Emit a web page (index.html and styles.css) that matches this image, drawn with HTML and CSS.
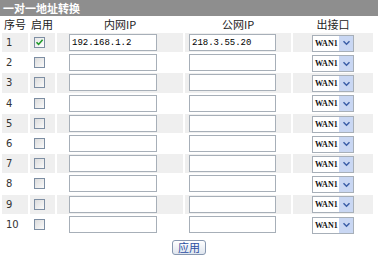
FILE: index.html
```
<!DOCTYPE html>
<html>
	<head>
		<meta charset="UTF-8">
		<title>一对一地址转换</title>
		<link rel="stylesheet" href="styles.css">
	</head>
	<body>
		<div class="title">一对一地址转换</div>
		<table class="map">
			<colgroup>
				<col class="c-seq"><col class="c-on"><col class="c-in"><col class="c-pub"><col class="c-out">
			</colgroup>
			<tr class="head">
				<th class="seq">序号</th><th class="on">启用</th><th>内网IP</th><th>公网IP</th><th>出接口</th>
			</tr>
			<tr class="odd">
				<td class="seq">1</td>
				<td class="on"><span class="chk checked"><svg width="9" height="9" viewBox="0 0 9 9"><path d="M1.5 4.2 L3.6 6.4 L7.6 1.8" fill="none" stroke="#1f9a2a" stroke-width="1.6"/></svg></span></td>
				<td class="in"><input class="ip" type="text" value="192.168.1.2"></td>
				<td class="pub"><input class="ip ip2" type="text" value="218.3.55.20"></td>
				<td class="out"><span class="sel"><span class="val">WAN1</span><span class="arr"><svg width="9" height="6" viewBox="0 0 9 6"><path d="M1.5 1.2 L4.5 4.2 L7.5 1.2" fill="none" stroke="#3c5fa8" stroke-width="1.5"/></svg></span></span></td>
			</tr>
			<tr>
				<td class="seq">2</td>
				<td class="on"><span class="chk"></span></td>
				<td class="in"><input class="ip" type="text"></td>
				<td class="pub"><input class="ip ip2" type="text"></td>
				<td class="out"><span class="sel"><span class="val">WAN1</span><span class="arr"><svg width="9" height="6" viewBox="0 0 9 6"><path d="M1.5 1.2 L4.5 4.2 L7.5 1.2" fill="none" stroke="#3c5fa8" stroke-width="1.5"/></svg></span></span></td>
			</tr>
			<tr class="odd">
				<td class="seq">3</td>
				<td class="on"><span class="chk"></span></td>
				<td class="in"><input class="ip" type="text"></td>
				<td class="pub"><input class="ip ip2" type="text"></td>
				<td class="out"><span class="sel"><span class="val">WAN1</span><span class="arr"><svg width="9" height="6" viewBox="0 0 9 6"><path d="M1.5 1.2 L4.5 4.2 L7.5 1.2" fill="none" stroke="#3c5fa8" stroke-width="1.5"/></svg></span></span></td>
			</tr>
			<tr>
				<td class="seq">4</td>
				<td class="on"><span class="chk"></span></td>
				<td class="in"><input class="ip" type="text"></td>
				<td class="pub"><input class="ip ip2" type="text"></td>
				<td class="out"><span class="sel"><span class="val">WAN1</span><span class="arr"><svg width="9" height="6" viewBox="0 0 9 6"><path d="M1.5 1.2 L4.5 4.2 L7.5 1.2" fill="none" stroke="#3c5fa8" stroke-width="1.5"/></svg></span></span></td>
			</tr>
			<tr class="odd">
				<td class="seq">5</td>
				<td class="on"><span class="chk"></span></td>
				<td class="in"><input class="ip" type="text"></td>
				<td class="pub"><input class="ip ip2" type="text"></td>
				<td class="out"><span class="sel"><span class="val">WAN1</span><span class="arr"><svg width="9" height="6" viewBox="0 0 9 6"><path d="M1.5 1.2 L4.5 4.2 L7.5 1.2" fill="none" stroke="#3c5fa8" stroke-width="1.5"/></svg></span></span></td>
			</tr>
			<tr>
				<td class="seq">6</td>
				<td class="on"><span class="chk"></span></td>
				<td class="in"><input class="ip" type="text"></td>
				<td class="pub"><input class="ip ip2" type="text"></td>
				<td class="out"><span class="sel"><span class="val">WAN1</span><span class="arr"><svg width="9" height="6" viewBox="0 0 9 6"><path d="M1.5 1.2 L4.5 4.2 L7.5 1.2" fill="none" stroke="#3c5fa8" stroke-width="1.5"/></svg></span></span></td>
			</tr>
			<tr class="odd">
				<td class="seq">7</td>
				<td class="on"><span class="chk"></span></td>
				<td class="in"><input class="ip" type="text"></td>
				<td class="pub"><input class="ip ip2" type="text"></td>
				<td class="out"><span class="sel"><span class="val">WAN1</span><span class="arr"><svg width="9" height="6" viewBox="0 0 9 6"><path d="M1.5 1.2 L4.5 4.2 L7.5 1.2" fill="none" stroke="#3c5fa8" stroke-width="1.5"/></svg></span></span></td>
			</tr>
			<tr>
				<td class="seq">8</td>
				<td class="on"><span class="chk"></span></td>
				<td class="in"><input class="ip" type="text"></td>
				<td class="pub"><input class="ip ip2" type="text"></td>
				<td class="out"><span class="sel"><span class="val">WAN1</span><span class="arr"><svg width="9" height="6" viewBox="0 0 9 6"><path d="M1.5 1.2 L4.5 4.2 L7.5 1.2" fill="none" stroke="#3c5fa8" stroke-width="1.5"/></svg></span></span></td>
			</tr>
			<tr class="odd">
				<td class="seq">9</td>
				<td class="on"><span class="chk"></span></td>
				<td class="in"><input class="ip" type="text"></td>
				<td class="pub"><input class="ip ip2" type="text"></td>
				<td class="out"><span class="sel"><span class="val">WAN1</span><span class="arr"><svg width="9" height="6" viewBox="0 0 9 6"><path d="M1.5 1.2 L4.5 4.2 L7.5 1.2" fill="none" stroke="#3c5fa8" stroke-width="1.5"/></svg></span></span></td>
			</tr>
			<tr>
				<td class="seq">10</td>
				<td class="on"><span class="chk"></span></td>
				<td class="in"><input class="ip" type="text"></td>
				<td class="pub"><input class="ip ip2" type="text"></td>
				<td class="out"><span class="sel"><span class="val">WAN1</span><span class="arr"><svg width="9" height="6" viewBox="0 0 9 6"><path d="M1.5 1.2 L4.5 4.2 L7.5 1.2" fill="none" stroke="#3c5fa8" stroke-width="1.5"/></svg></span></span></td>
			</tr>
		</table>
		<div class="actions"><button class="btn" type="button">应用</button></div>
	</body>
</html>
```

FILE: styles.css
```
*{
	margin:0;
	padding:0;
	box-sizing:border-box;
}
body{
	background:#fff;
	font-family:"Noto Sans CJK SC","Liberation Sans",sans-serif;
	font-size:11px;
	color:#333;
}
.title{
	height:16px;
	line-height:16px;
	background:#8e8e8e;
	color:#fff;
	font-weight:bold;
	font-size:11px;
	padding-left:3px;
}
.map{
	border-collapse:separate;
	border-spacing:2px 1px;
	table-layout:fixed;
	width:375px;
}
.c-seq{width:26px;}
.c-on{width:25px;}
.c-in{width:126px;}
.c-pub{width:106px;}
.c-out{width:80px;}

.map th{
	height:15px;
	font-weight:normal;
	font-size:11px;
	line-height:15px;
	text-align:center;
	color:#222;
}
.map th.seq{text-align:left;padding-left:2px;}
.map th.on{text-align:left;padding-left:1px;}

.map td{
	height:19.2px;
	vertical-align:middle;
}
.map tr.odd td{
	background:#efefef;
}
td.seq{
	padding-left:4px;
	font-family:"DejaVu Sans",sans-serif;
	font-size:10px;
}
td.on{padding-left:4px;}
td.in{padding-left:12px;}
td.pub{padding-left:4px;}
td.out{text-align:center;}

.chk{
	display:flex;
	align-items:center;
	justify-content:center;
	width:11px;
	height:11px;
	border:1px solid #7d8ea3;
	background:linear-gradient(135deg,#dcdcdc,#fafafa);
}
.chk.checked{background:linear-gradient(135deg,#e6e6e6,#fff);}

.ip{
	display:block;
	width:88px;
	height:17px;
	border:1px solid #a7afb8;
	background:#fff;
	padding:0 2px;
	font-family:"Liberation Mono",monospace;
	font-size:9px;
	color:#000;
	outline:none;
}
.ip2{width:87px;}

.sel{
	display:inline-flex;
	align-items:center;
	width:42px;
	height:17px;
	border:1px solid #a7afb8;
	background:#fff;
	vertical-align:middle;
}
.sel .val{
	flex:1;
	padding-left:2px;
	font-family:"Liberation Serif",serif;
	font-weight:bold;
	font-size:8px;
	color:#111;
	text-align:left;
}
.sel .arr{
	display:flex;
	align-items:center;
	justify-content:center;
	width:14px;
	height:15px;
	background:#c9d7f3;
}

.actions{
	display:flex;
	justify-content:center;
	padding-top:5px;
}
.btn{
	width:34px;
	height:15px;
	border:1px solid #8797b0;
	border-radius:3px;
	background:linear-gradient(#ffffff,#dfe5ee);
	color:#2c4fa3;
	font-family:"Noto Sans CJK SC",sans-serif;
	font-size:11px;
	line-height:13px;
}
```
